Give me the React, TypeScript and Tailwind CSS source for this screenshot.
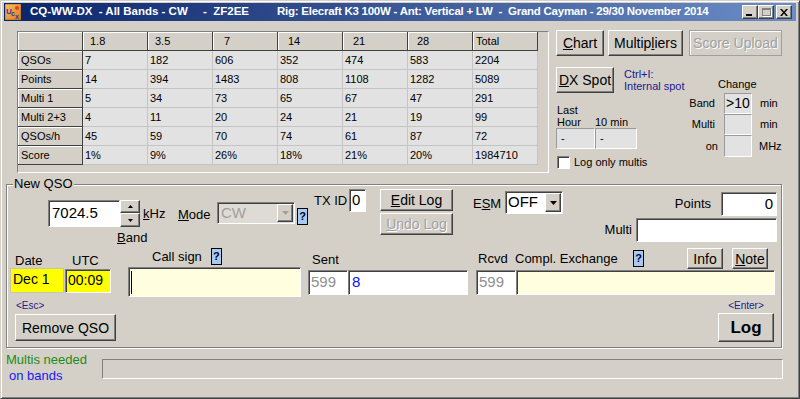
import React from "react";

const FONT = "font-['Liberation_Sans',Arial,sans-serif]";
const raised =
  "bg-[#d4d0c8] border border-t-white border-l-white border-r-[#404040] border-b-[#404040] shadow-[inset_-1px_-1px_0_#808080]";
const sunken =
  "border border-t-[#808080] border-l-[#808080] border-r-white border-b-white shadow-[inset_1px_1px_0_#404040]";
const thin = "border border-t-[#9a9a9a] border-l-[#9a9a9a] border-r-white border-b-white";

function Arrow({ color = "#000" }: { color?: string }) {
  return (
    <svg width="7" height="4" viewBox="0 0 7 4">
      <path d="M0 0h7L3.5 4z" fill={color} />
    </svg>
  );
}
function Up() {
  return (
    <svg width="5" height="3" viewBox="0 0 5 3">
      <path d="M0 3h5L2.5 0z" fill="#000" />
    </svg>
  );
}
function Down() {
  return (
    <svg width="5" height="3" viewBox="0 0 5 3">
      <path d="M0 0h5L2.5 3z" fill="#000" />
    </svg>
  );
}

function Help({ className = "" }: { className?: string }) {
  return (
    <div
      className={`w-[11px] h-[17px] shrink-0 bg-[#a6caf0] border border-black flex items-center justify-center text-[11px] font-bold leading-none text-[#000030] ${className}`}
    >
      ?
    </div>
  );
}

function Logo() {
  return (
    <svg width="16" height="16" viewBox="0 0 16 16">
      <defs>
        <linearGradient id="lg" x1="0" y1="0" x2="1" y2="1">
          <stop offset="0" stopColor="#f7c25a" />
          <stop offset="1" stopColor="#e0782a" />
        </linearGradient>
      </defs>
      <rect x="0" y="0" width="16" height="16" fill="url(#lg)" stroke="#8a5a20" strokeWidth="0.6" />
      <circle cx="12" cy="4" r="2" fill="#e84020" />
      <text x="1" y="10" fontSize="8" fontFamily="Liberation Sans" fill="#3a3aa0" fontWeight="bold">
        U
      </text>
      <text x="6" y="12" fontSize="7" fontFamily="Liberation Sans" fill="#3a3aa0">
        c
      </text>
      <text x="10" y="15" fontSize="7" fontFamily="Liberation Sans" fill="#3a3aa0">
        x
      </text>
    </svg>
  );
}

const headers = ["", "1.8", "3.5", "7", "14", "21", "28", "Total"];
const hpad = ["", "pl-[7px]", "pl-[7px]", "pl-[11px]", "pl-[10px]", "pl-[10px]", "pl-[9px]", "pl-[3px]"];
const rows = [
  ["QSOs", "7", "182", "606", "352", "474", "583", "2204"],
  ["Points", "14", "394", "1483", "808", "1108", "1282", "5089"],
  ["Multi 1", "5", "34", "73", "65", "67", "47", "291"],
  ["Multi 2+3", "4", "11", "20", "24", "21", "19", "99"],
  ["QSOs/h", "45", "59", "70", "74", "61", "87", "72"],
  ["Score", "1%", "9%", "26%", "18%", "21%", "20%", "1984710"],
];

const headCell =
  "h-[19px] bg-[#d4d0c8] border-r border-b border-r-[#404040] border-b-[#404040] shadow-[inset_1px_1px_0_#fff] leading-[18px] text-[11px] whitespace-nowrap";
const dataCell =
  "h-[19px] bg-[#e2e2e2] border-r border-b border-[#c4c4c4] leading-[18px] text-[11px] pl-[2px] whitespace-nowrap";

function StatsTable() {
  return (
    <div className="ml-[13px] mt-[1px] w-[532px] h-[142px] shrink-0 border border-t-[#808080] border-l-[#808080] border-r-white border-b-white">
      <div className="grid grid-cols-[repeat(8,65px)]">
        {headers.map((h, i) => (
          <div key={"h" + i} className={`${headCell} ${hpad[i]}`}>
            {h}
          </div>
        ))}
        {rows.map((r, ri) =>
          r.map((c, ci) => (
            <div key={ri + "-" + ci} className={ci === 0 ? `${headCell} pl-[3px]` : dataCell}>
              {c}
            </div>
          ))
        )}
      </div>
    </div>
  );
}

function RightPanel() {
  return (
    <div className="ml-[7px] w-[234px] shrink-0 flex flex-col">
      <div className="flex h-[26px]">
        <button className={`${raised} w-[48px] h-[26px] text-[14px] leading-none`}>
          <u>C</u>hart
        </button>
        <button className={`${raised} ml-[4px] w-[75px] h-[26px] text-[14px] leading-none`}>
          Multip<u>l</u>iers
        </button>
        <div className="ml-[6px] w-[93px] h-[26px] border border-[#a0a0a0] shadow-[inset_1px_1px_0_#fff] flex items-center justify-center text-[14px] text-[#a0a0a0] [text-shadow:1px_1px_0_#fff]">
          Score Upload
        </div>
      </div>
      <div className="flex">
        <div className="w-[130px] flex flex-col">
          <div className="mt-[11px] flex items-start">
            <button className={`${raised} w-[58px] h-[26px] text-[14px] leading-none`}>
              <u>D</u>X Spot
            </button>
            <div className="ml-[10px] mt-[1px] text-[11px] leading-[12px] text-[#202090] whitespace-nowrap">
              <div>Ctrl+I:</div>
              <div>Internal spot</div>
            </div>
          </div>
          <div className="mt-[11px] ml-[1px] text-[11px] leading-[12px]">Last</div>
          <div className="flex text-[11px] leading-[12px]">
            <div className="w-[39px] pl-[1px]">Hour</div>
            <div>10 min</div>
          </div>
          <div className="flex">
            <div className={`${thin} w-[39px] h-[21px] bg-[#e2e2e2] text-[11px] leading-[19px] pl-[4px]`}>-</div>
            <div className={`${thin} w-[42px] h-[21px] bg-[#e2e2e2] text-[11px] leading-[19px] pl-[4px]`}>-</div>
          </div>
          <div className="mt-[7px] flex items-center h-[13px]">
            <div className={`${sunken} ml-[1px] w-[13px] h-[13px] bg-white`} />
            <div className="ml-[4px] text-[11px] leading-[13px] whitespace-nowrap">Log only multis</div>
          </div>
        </div>
        <div className="w-[104px] flex flex-col">
          <div className="mt-[22px] ml-[32px] text-[11px] leading-[12px]">Change</div>
          <div className="mt-[3px] flex items-center h-[21px]">
            <div className="w-[29px] text-right text-[11px]">Band</div>
            <div className={`${thin} ml-[9px] w-[28px] h-[21px] bg-[#e2e2e2] text-[14px] leading-[18px] pl-[1px]`}>
              &gt;10
            </div>
            <div className="ml-[8px] text-[11px]">min</div>
          </div>
          <div className="flex items-center h-[21px]">
            <div className="w-[29px] text-right text-[11px]">Multi</div>
            <div className={`${thin} ml-[9px] w-[28px] h-[21px] bg-[#e2e2e2]`} />
            <div className="ml-[8px] text-[11px]">min</div>
          </div>
          <div className="flex items-center h-[22px]">
            <div className="w-[32px] text-right text-[11px]">on</div>
            <div className={`${thin} ml-[6px] w-[28px] h-[22px] bg-[#e2e2e2]`} />
            <div className="ml-[7px] text-[11px]">MHz</div>
          </div>
        </div>
      </div>
    </div>
  );
}

function NewQso() {
  return (
    <div className="ml-[2px] w-[776px] h-[164px] shrink-0 relative border border-[#808080] shadow-[inset_1px_1px_0_#fff,1px_1px_0_#fff] flex flex-col">
      <div className="absolute left-[6px] top-[-9px] px-[1px] bg-[#d4d0c8] text-[13px] leading-[15px]">New QSO</div>

      {/* Row A */}
      <div className="mt-[3px] h-[58px] flex items-start text-[13px]">
        <div className="ml-[41px] w-[130px] shrink-0 mt-[12px] flex flex-col">
          <div className="flex items-start">
            <div className={`${sunken} w-[72px] h-[27px] bg-white text-[15px] pl-[3px] flex items-center`}>7024.5</div>
            <div className="w-[20px] flex flex-col">
              <div className={`${raised} h-[13px] flex items-center justify-center`}>
                <Up />
              </div>
              <div className={`${raised} h-[14px] flex items-center justify-center`}>
                <Down />
              </div>
            </div>
            <div className="ml-[3px] mt-[6px] leading-[15px]">
              <u>k</u>Hz
            </div>
          </div>
          <div className="ml-[69px] mt-[3px] leading-[15px]">
            <u>B</u>and
          </div>
        </div>
        <div className="w-[39px] shrink-0 mt-[19px] leading-[15px]">
          <u>M</u>ode
        </div>
        <div className={`${sunken} w-[78px] h-[22px] shrink-0 mt-[14px] bg-[#dedbd5] flex items-center`}>
          <div className="flex-1 pl-[3px] text-[15px] text-[#a0a0a0]">CW</div>
          <div className={`${raised} w-[16px] h-[18px] mr-[1px] flex items-center justify-center`}>
            <Arrow color="#a0a0a0" />
          </div>
        </div>
        <Help className="ml-[2px] mt-[20px]" />
        <div className="ml-[6px] w-[35px] shrink-0 mt-[5px] leading-[15px] whitespace-nowrap">TX ID</div>
        <div className={`${sunken} w-[17px] h-[23px] shrink-0 mt-[1px] bg-white text-[15px] pl-[2px] leading-[20px]`}>0</div>
        <div className="ml-[14px] w-[73px] shrink-0 mt-[1px] flex flex-col">
          <button className={`${raised} h-[22px] text-[14px] leading-none`}>
            <u>E</u>dit Log
          </button>
          <div
            className={`${raised} mt-[2px] h-[22px] text-[14px] flex items-center justify-center text-[#a0a0a0] [text-shadow:1px_1px_0_#fff]`}
          >
            <u>U</u>ndo Log
          </div>
        </div>
        <div className="ml-[20px] w-[32px] shrink-0 mt-[8px] leading-[15px]">
          E<u>S</u>M
        </div>
        <div className={`${sunken} w-[58px] h-[23px] shrink-0 mt-[3px] bg-white flex items-center`}>
          <div className="flex-1 pl-[2px] text-[15px]">OFF</div>
          <div className={`${raised} w-[16px] h-[19px] mr-[1px] flex items-center justify-center`}>
            <Arrow />
          </div>
        </div>
        <div className="ml-auto mr-[4px] mt-[4px] flex flex-col items-end">
          <div className="flex items-center h-[24px]">
            <div>Points</div>
            <div className={`${sunken} ml-[10px] w-[56px] h-[24px] bg-white text-[15px] text-right pr-[3px] leading-[21px]`}>0</div>
          </div>
          <div className="mt-[2px] flex items-center h-[24px]">
            <div>Multi</div>
            <div className={`${sunken} ml-[4px] w-[141px] h-[24px] bg-white`} />
          </div>
        </div>
      </div>

      {/* Row B */}
      <div className="h-[51px] flex items-start text-[13px]">
        <div className="ml-[3px] flex shrink-0">
          <div className="w-[55px] flex flex-col">
            <div className="pl-[5px] mt-[7px] leading-[15px]">Date</div>
            <div className="w-[54px] h-[25px] bg-[#ffff00] border border-[#c8c8a0] text-[14px] pl-[2px] leading-[20px]">Dec 1</div>
          </div>
          <div className="w-[46px] flex flex-col">
            <div className="pl-[7px] mt-[7px] leading-[15px]">UTC</div>
            <div className={`${sunken} mt-[1px] w-[46px] h-[24px] bg-[#ffff00] text-[14px] pl-[2px] leading-[21px]`}>00:09</div>
          </div>
        </div>
        <div className="ml-[17px] w-[173px] shrink-0 flex flex-col">
          <div className="mt-[2px] h-[17px] flex items-center">
            <div className="pl-[24px] whitespace-nowrap">Call sign</div>
            <Help className="ml-[9px]" />
          </div>
          <div className={`${sunken} mt-[2px] h-[30px] bg-[#ffffe0] flex items-center`}>
            <div className="ml-[2px] w-[1px] h-[23px] bg-black" />
          </div>
        </div>
        <div className="ml-[7px] w-[160px] shrink-0 flex flex-col">
          <div className="pl-[4px] mt-[6px] leading-[15px]">Sent</div>
          <div className="mt-[3px] flex">
            <div className={`${sunken} w-[40px] h-[25px] bg-white text-[15px] text-[#909090] pl-[2px] leading-[21px]`}>599</div>
            <div className={`${sunken} w-[120px] h-[25px] bg-white text-[15px] text-[#1010f0] pl-[3px] leading-[21px]`}>8</div>
          </div>
        </div>
        <div className="ml-[8px] w-[300px] shrink-0 flex flex-col">
          <div className="mt-[2px] h-[21px] flex items-center">
            <div className="w-[39px] pl-[2px]">Rcvd</div>
            <div className="w-[118px] whitespace-nowrap">Compl. Exchange</div>
            <Help />
            <button className={`${raised} ml-[43px] w-[36px] h-[21px] text-[14px] leading-none`}>Info</button>
            <button className={`${raised} ml-[9px] w-[36px] h-[21px] text-[14px] leading-none`}>
              <u>N</u>ote
            </button>
          </div>
          <div className="mt-[1px] flex">
            <div className={`${sunken} w-[40px] h-[25px] bg-white text-[15px] text-[#909090] pl-[2px] leading-[21px]`}>599</div>
            <div className={`${sunken} w-[259px] h-[25px] bg-[#ffffe0]`} />
          </div>
        </div>
      </div>

      {/* Row C */}
      <div className="flex items-start">
        <div className="ml-[8px] flex flex-col">
          <div className="mt-[3px] pl-[1px] text-[10px] leading-[11px] text-[#202090]">&lt;Esc&gt;</div>
          <button className={`${raised} mt-[3px] w-[101px] h-[27px] text-[14px] leading-none`}>Remove QSO</button>
        </div>
        <div className="ml-auto mr-[7px] flex flex-col items-center">
          <div className="mt-[3px] text-[10px] leading-[11px] text-[#202090]">&lt;Enter&gt;</div>
          <button className={`${raised} mt-[2px] w-[56px] h-[29px] text-[17px] font-bold leading-none`}>Log</button>
        </div>
      </div>
    </div>
  );
}

export default function App() {
  return (
    <div
      className={`w-[800px] h-[399px] bg-[#d4d0c8] ${FONT} text-black overflow-hidden border border-t-[#d4d0c8] border-l-[#d4d0c8] border-r-[#404040] border-b-[#404040] shadow-[inset_1px_1px_0_#fff,inset_-1px_-1px_0_#808080] px-[3px] pt-[2px] flex flex-col`}
    >
      {/* Title bar */}
      <div className="h-[18px] shrink-0 flex items-center bg-[linear-gradient(to_right,#0a246a,#6b8dc6)] text-white font-bold text-[11.5px] whitespace-pre overflow-hidden">
        <div className="ml-[1px] w-[16px] h-[16px] shrink-0">
          <Logo />
        </div>
        <span className="ml-[9px] w-[173px] shrink-0">CQ-WW-DX  - All Bands - CW</span>
        <span className="w-[74px] shrink-0">-  ZF2EE</span>
        <span className="shrink-0 tracking-[-0.25px]">Rig: Elecraft K3 100W - Ant: Vertical + LW  -  Grand Cayman - 29/30 November 2014</span>
        <div className="ml-auto mr-[4px] flex items-center shrink-0">
          <div className={`${raised} w-[16px] h-[14px] flex items-end justify-center pb-[2px]`}>
            <div className="w-[6px] h-[2px] bg-black mr-[2px]" />
          </div>
          <div className={`${raised} w-[16px] h-[14px] flex items-center justify-center`}>
            <div className="w-[9px] h-[8px] border border-[#808080] border-t-2 shadow-[1px_1px_0_#fff]" />
          </div>
          <div className={`${raised} ml-[2px] w-[16px] h-[14px] flex items-center justify-center`}>
            <svg width="8" height="7" viewBox="0 0 8 7">
              <path d="M0 0h2l2 2.5L6 0h2L5 3.5 8 7H6L4 4.5 2 7H0l3-3.5z" fill="#000" />
            </svg>
          </div>
        </div>
      </div>

      {/* Top section */}
      <div className="mt-[9px] h-[154px] shrink-0 flex items-start">
        <StatsTable />
        <RightPanel />
      </div>

      <NewQso />

      {/* Status */}
      <div className="mt-[3px] flex items-start">
        <div className="ml-[2px] w-[96px] shrink-0 flex flex-col text-[13px] leading-[16px] whitespace-nowrap">
          <div className="mt-[1px] text-[#1a8c1a]">Multis needed</div>
          <div className="pl-[3px] text-[#1818f0]">on bands</div>
        </div>
        <div className="mt-[8px] w-[681px] h-[20px] border border-t-[#808080] border-l-[#808080] border-r-white border-b-white" />
      </div>
    </div>
  );
}
